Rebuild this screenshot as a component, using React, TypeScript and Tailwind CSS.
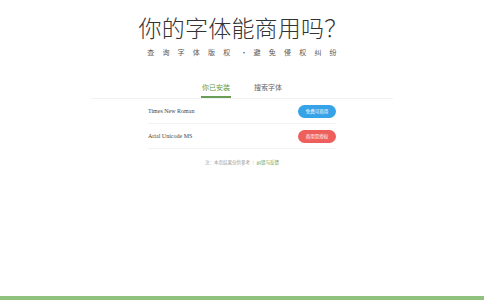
import React from "react";

interface FontRow {
  name: string;
  free: boolean;
}

const rows: FontRow[] = [
  { name: "Times New Roman", free: true },
  { name: "Arial Unicode MS", free: false },
];

const cjk = { fontFamily: '"Noto Sans CJK SC", "Noto Sans", sans-serif' };

export default function App() {
  return (
    <div className="relative h-[300px] w-full bg-white" style={cjk}>
      {/* header */}
      <div className="flex flex-col items-center pt-[10px]">
        <h1 className="pl-[2px] text-[23px] font-light leading-[34px] tracking-[0.2px] text-[#333]">
          你的字体能商用吗？
        </h1>
        <p className="mt-[2px] pl-[8px] text-[7px] leading-[12px] tracking-[8.2px] text-[#555]">
          查询字体版权
          <span className="inline-block w-[15.2px] pr-[4px] text-center tracking-normal">·</span>
          避免侵权纠纷
        </p>
      </div>

      {/* tabs */}
      <div className="mx-auto mt-[24px] w-[302px] border-b border-[#f1f1f1]">
        <div className="flex justify-center gap-[22px] text-[7px] leading-[10px]">
          <div className="border-b-[2px] border-[#6a9e55] px-[1px] pb-[4px] text-[#5f9a46]">你已安装</div>
          <div className="px-[1px] pb-[4px] text-[#666]">搜索字体</div>
        </div>
      </div>

      {/* list */}
      <div className="mx-auto w-[188px]">
        {rows.map((r) => (
          <div
            key={r.name}
            className="flex h-[25px] items-center justify-between border-b border-[#f3f3f3]"
          >
            <span
              className="text-[6px] text-[#444]"
              style={{ fontFamily: '"Liberation Serif", serif' }}
            >
              {r.name}
            </span>
            <span
              className={
                "flex h-[13px] w-[38px] items-center justify-center rounded-full text-[4.5px] text-white " +
                (r.free ? "bg-[#36a3e8]" : "bg-[#ee5f5b]")
              }
            >
              {r.free ? "免费可商用" : "商用需授权"}
            </span>
          </div>
        ))}
      </div>

      {/* note */}
      <p className="mt-[10px] text-center text-[4.5px] text-[#999]">
        注：本页结果仅供参考 ｜ <span className="text-[#5f9a46]">纠错与反馈</span>
      </p>

      <div className="absolute bottom-0 left-0 h-[4px] w-full bg-[#8fc17f]" />
    </div>
  );
}
